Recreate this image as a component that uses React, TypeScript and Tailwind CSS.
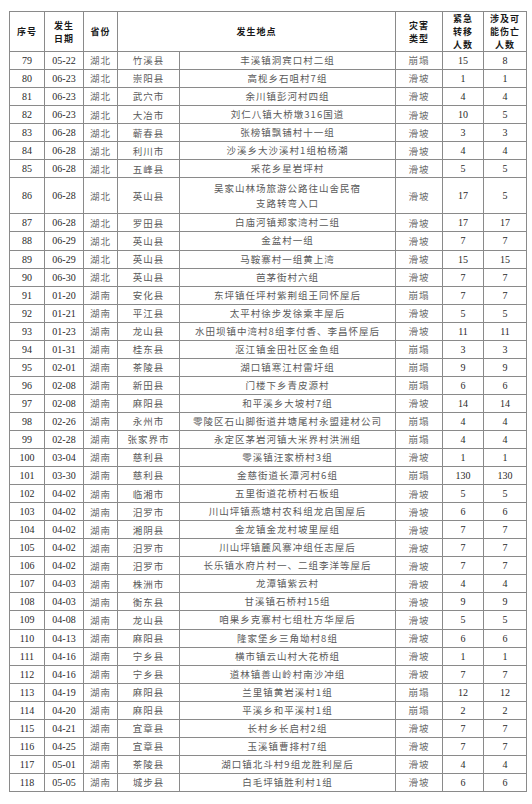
import React from "react";

type Row = [number, string, string, string, string, string, number, number];

const rows: Row[] = [
  [79, "05-22", "湖北", "竹溪县", "丰溪镇洞宾口村二组", "崩塌", 15, 8],
  [80, "06-23", "湖北", "崇阳县", "高枧乡石咀村7组", "滑坡", 1, 1],
  [81, "06-23", "湖北", "武穴市", "余川镇彭河村四组", "滑坡", 4, 4],
  [82, "06-23", "湖北", "大冶市", "刘仁八镇大桥墩316国道", "滑坡", 10, 5],
  [83, "06-28", "湖北", "蕲春县", "张榜镇飘铺村十一组", "滑坡", 3, 3],
  [84, "06-28", "湖北", "利川市", "沙溪乡大沙溪村1组柏杨潮", "滑坡", 4, 4],
  [85, "06-28", "湖北", "五峰县", "采花乡星岩坪村", "滑坡", 5, 5],
  [86, "06-28", "湖北", "英山县", "吴家山林场旅游公路往山舍民宿|支路转弯入口", "滑坡", 17, 5],
  [87, "06-28", "湖北", "罗田县", "白庙河镇郑家湾村二组", "滑坡", 17, 17],
  [88, "06-29", "湖北", "英山县", "金盆村一组", "滑坡", 7, 7],
  [89, "06-29", "湖北", "英山县", "马鞍寨村一组黄上湾", "滑坡", 15, 15],
  [90, "06-30", "湖北", "英山县", "芭茅街村六组", "滑坡", 7, 7],
  [91, "01-20", "湖南", "安化县", "东坪镇任坪村紫荆组王同怀屋后", "崩塌", 7, 7],
  [92, "01-21", "湖南", "平江县", "太平村徐步发徐乘丰屋后", "滑坡", 5, 5],
  [93, "01-23", "湖南", "龙山县", "水田坝镇中湾村8组李付香、李昌怀屋后", "滑坡", 11, 11],
  [94, "01-31", "湖南", "桂东县", "沤江镇金田社区金鱼组", "崩塌", 3, 3],
  [95, "02-01", "湖南", "茶陵县", "湖口镇寒江村雷圩组", "崩塌", 9, 9],
  [96, "02-08", "湖南", "新田县", "门楼下乡青皮源村", "崩塌", 6, 6],
  [97, "02-08", "湖南", "麻阳县", "和平溪乡大坡村7组", "滑坡", 14, 14],
  [98, "02-26", "湖南", "永州市", "零陵区石山脚街道井塘尾村永盟建材公司", "崩塌", 4, 4],
  [99, "02-28", "湖南", "张家界市", "永定区茅岩河镇大米界村洪洲组", "崩塌", 4, 4],
  [100, "03-04", "湖南", "慈利县", "零溪镇汪家桥村3组", "滑坡", 1, 1],
  [101, "03-30", "湖南", "慈利县", "金慈街道长潭河村6组", "崩塌", 130, 130],
  [102, "04-02", "湖南", "临湘市", "五里街道花桥村石板组", "滑坡", 5, 5],
  [103, "04-02", "湖南", "汨罗市", "川山坪镇燕塘村农科组龙启国屋后", "滑坡", 6, 6],
  [104, "04-02", "湖南", "湘阴县", "金龙镇金龙村坡里屋组", "滑坡", 7, 7],
  [105, "04-02", "湖南", "汨罗市", "川山坪镇麓风寨冲组任志屋后", "滑坡", 7, 7],
  [106, "04-02", "湖南", "汨罗市", "长乐镇水府片村一、二组李洋等屋后", "滑坡", 7, 7],
  [107, "04-03", "湖南", "株洲市", "龙潭镇紫云村", "滑坡", 4, 4],
  [108, "04-03", "湖南", "衡东县", "甘溪镇石桥村15组", "滑坡", 9, 9],
  [109, "04-08", "湖南", "龙山县", "咱果乡克寨村七组杜方华屋后", "滑坡", 5, 5],
  [110, "04-13", "湖南", "麻阳县", "隆家堡乡三角坳村8组", "滑坡", 6, 6],
  [111, "04-16", "湖南", "宁乡县", "横市镇云山村大花桥组", "滑坡", 1, 1],
  [112, "04-16", "湖南", "宁乡县", "道林镇善山岭村南沙冲组", "滑坡", 7, 7],
  [113, "04-19", "湖南", "麻阳县", "兰里镇黄岩溪村1组", "崩塌", 12, 12],
  [114, "04-20", "湖南", "麻阳县", "平溪乡和平溪村1组", "崩塌", 2, 2],
  [115, "04-21", "湖南", "宜章县", "长村乡长启村2组", "滑坡", 7, 7],
  [116, "04-25", "湖南", "宜章县", "玉溪镇曹排村7组", "滑坡", 7, 7],
  [117, "05-01", "湖南", "茶陵县", "湖口镇北斗村9组龙胜利屋后", "滑坡", 4, 4],
  [118, "05-05", "湖南", "城步县", "白毛坪镇胜利村1组", "滑坡", 6, 6],
];

const td = "border border-[#8a8a8a] p-0 text-center align-middle";
const num = "font-['Liberation_Serif',serif] text-[10px] text-[#2a2a2a]";
const cn = "font-['Noto_Sans_CJK_SC',sans-serif] text-[9.5px] tracking-[1px] text-[#5a5a5a]";
const th =
  "border border-[#8a8a8a] p-0 text-center align-middle font-['Noto_Sans_CJK_SC',sans-serif] font-bold text-[9px] tracking-[1px] text-[#1a1a1a]";

function H({ lines }: { lines: string[] }) {
  return (
    <div className="flex flex-col items-center">
      {lines.map((l) => (
        <div key={l} className="h-[13px] leading-[13px]">
          {l}
        </div>
      ))}
    </div>
  );
}

export default function App() {
  return (
    <div className="w-[532px] h-[804px] bg-white overflow-hidden pt-[11px] pl-[9px]">
      <table className="w-[517px] table-fixed border-collapse border-[1.5px] border-[#4a4a4a]">
        <colgroup>
          <col className="w-[35px]" />
          <col className="w-[39px]" />
          <col className="w-[34px]" />
          <col className="w-[62px]" />
          <col className="w-[216px]" />
          <col className="w-[47px]" />
          <col className="w-[41px]" />
          <col className="w-[43px]" />
        </colgroup>
        <thead>
          <tr className="h-[40px]">
            <th className={th}>
              <H lines={["序号"]} />
            </th>
            <th className={th}>
              <H lines={["发生", "日期"]} />
            </th>
            <th className={th}>
              <H lines={["省份"]} />
            </th>
            <th className={th} colSpan={2}>
              <H lines={["发生地点"]} />
            </th>
            <th className={th}>
              <H lines={["灾害", "类型"]} />
            </th>
            <th className={th}>
              <H lines={["紧急", "转移", "人数"]} />
            </th>
            <th className={th}>
              <H lines={["涉及可", "能伤亡", "人数"]} />
            </th>
          </tr>
        </thead>
        <tbody>
          {rows.map((r) => {
            const lines = r[4].split("|");
            const dbl = lines.length > 1;
            return (
              <tr key={r[0]} className={dbl ? "h-[36.1px]" : "h-[18.05px]"}>
                <td className={`${td} ${num}`}>{r[0]}</td>
                <td className={`${td} ${num}`}>{r[1]}</td>
                <td className={`${td} ${cn} text-[#6e6e6e]`}>{r[2]}</td>
                <td className={`${td} ${cn}`}>{r[3]}</td>
                <td className={`${td} ${cn} leading-[15px]`}>
                  {lines.map((l, i) => (
                    <div key={i}>{l}</div>
                  ))}
                </td>
                <td className={`${td} ${cn} text-[#6e6e6e]`}>{r[5]}</td>
                <td className={`${td} ${num}`}>{r[6]}</td>
                <td className={`${td} ${num}`}>{r[7]}</td>
              </tr>
            );
          })}
        </tbody>
      </table>
    </div>
  );
}
